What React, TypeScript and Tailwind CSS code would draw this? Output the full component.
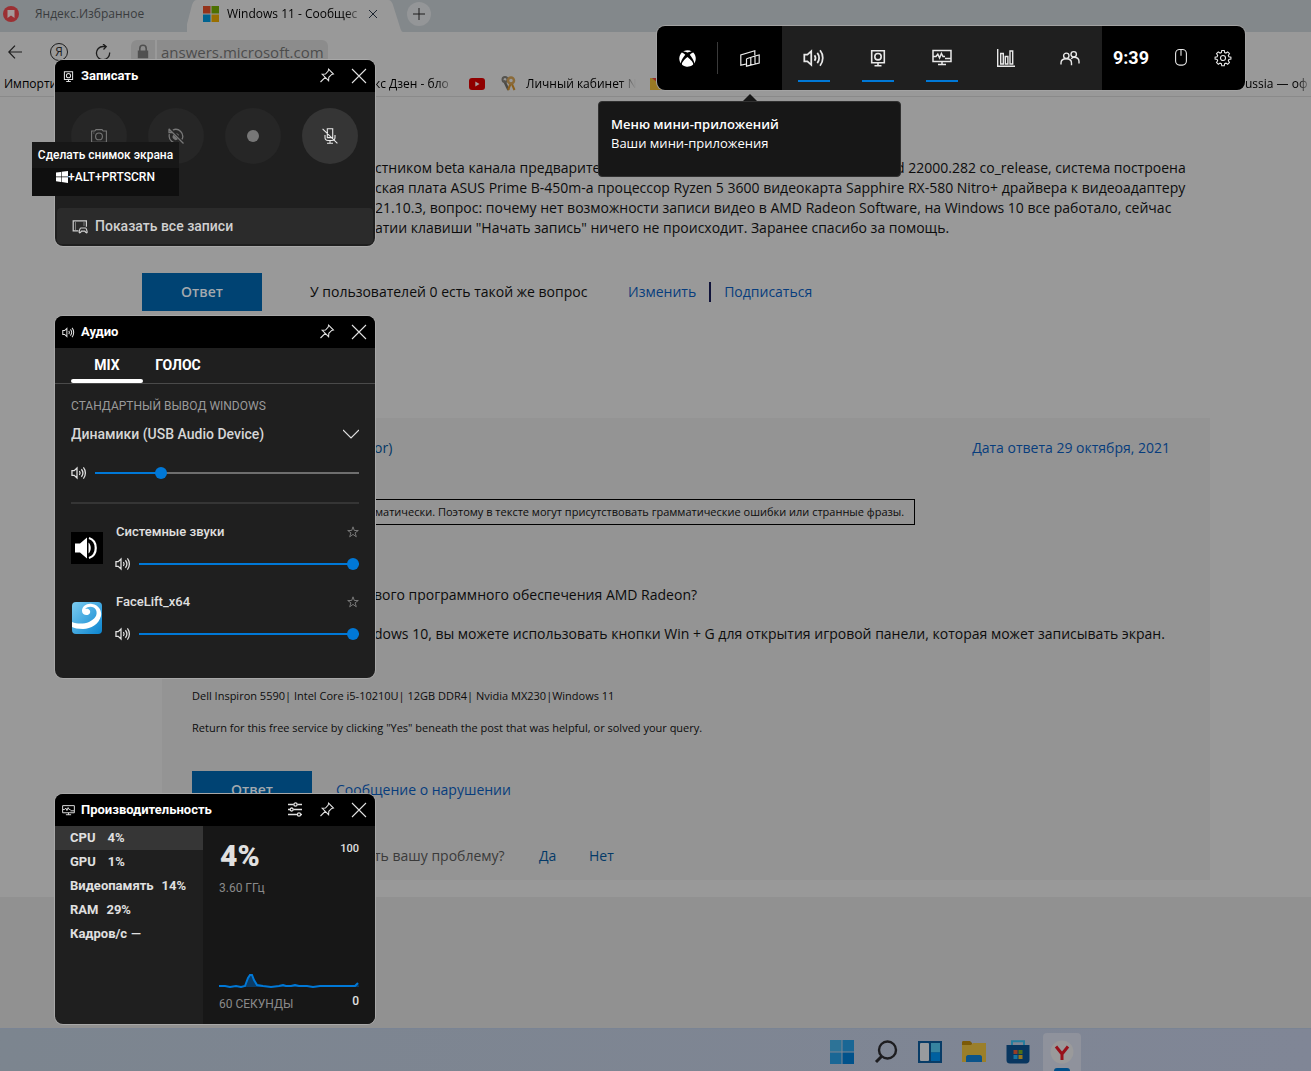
import { useState } from "react";
import type { CSSProperties, ReactNode } from "react";
import { FaXbox } from "react-icons/fa";

const CPU_POINTS =
  "0,14 6,14 11,15 17,14 22,15 26,14 29,6 31,3 33,3 35,8 38,13 44,14 52,15 60,14 64,13 67,14 72,14 76,13 80,14 88,14 94,15 101,14 108,14 116,14 124,14 132,14 136,14 139,11";

const METRICS = [
  { name: "CPU", value: "4%", gap: "gap-3" },
  { name: "GPU", value: "1%", gap: "gap-3" },
  { name: "Видеопамять", value: "14%", gap: "gap-2" },
  { name: "RAM", value: "29%", gap: "gap-2" },
  { name: "Кадров/с", value: "—", gap: "gap-1" },
];

type IconProps = { className?: string };

function SpeakerIcon({ className = "h-4 w-4" }: IconProps) {
  return (
    <svg className={className} viewBox="0 0 20 20" fill="none" stroke="currentColor" strokeWidth="1.6">
      <path d="M1.2 7v6H4l3.500 3.200V3.800L4 7zM10.500 7.500c1 1.400 1 3.600 0 5M13 5.300c2.200 2.700 2.200 6.700 0 9.400M15.500 3c3.300 4 3.300 10 0 14" />
    </svg>
  );
}

function CaptureIcon({ className = "h-5 w-5" }: IconProps) {
  return (
    <svg className={className} viewBox="0 0 20 20" fill="none" stroke="currentColor" strokeWidth="1.6">
      <path d="M3.700 2.700h12.600v12H3.700zM10 14.700v3M6.500 17.700h7" />
      <circle cx="10" cy="8.700" r="3.200" />
    </svg>
  );
}

function MonitorIcon({ className = "h-5 w-5" }: IconProps) {
  return (
    <svg className={className} viewBox="0 0 20 20" fill="none" stroke="currentColor" strokeWidth="1.5">
      <path d="M1 2.500h18v11H1zM10 13.500v3M6 16.500h8M1.500 8.500h2.500l1.800-2.300 1.800 3.800 1.800-4.500L11 8.500h2M13 10.500h5.500" />
    </svg>
  );
}

function WidgetsIcon() {
  return (
    <svg className="h-5 w-5" viewBox="0 0 20 20" fill="none" stroke="currentColor" strokeWidth="1.2">
      <path d="M6.500 16 .8 17.200V7l14-4.200v4.400" />
      <path d="M6.500 10.700v7.500l12.700-3.200V7l-4.200 1v8M10.800 9.500v7.500M6.500 10.700 15 8" />
    </svg>
  );
}

function ChartIcon() {
  return (
    <svg className="h-5 w-5" viewBox="0 0 20 20" fill="none" stroke="currentColor" strokeWidth="1.4">
      <path d="M1.700 1v17.300H19M4.700 5.500h2.600v10.500H4.700zM9.300 8.500h2.600V16H9.300zM14 3h2.700v13H14z" />
    </svg>
  );
}

function PeopleIcon() {
  return (
    <svg className="h-5 w-5" viewBox="0 0 20 20" fill="none" stroke="currentColor" strokeWidth="1.4">
      <circle cx="6.300" cy="7.800" r="2.700" />
      <circle cx="13.700" cy="6.300" r="2.700" />
      <path d="M1 16.500v-1.600c0-2.500 2-4.200 5.300-4.200s5.200 1.700 5.200 4.200v2.300M11.300 11c.8-1.400 1.700-1.800 2.700-1.800 3 0 5 1.800 5 4.300v2" />
    </svg>
  );
}

function MouseIcon() {
  return (
    <svg className="h-5 w-5" viewBox="0 0 20 20" fill="none" stroke="currentColor" strokeWidth="1.1">
      <rect x="4.600" y="1.500" width="10.800" height="15.600" rx="4" />
      <path d="M10 2v5.800" />
    </svg>
  );
}

function GearIcon() {
  return (
    <svg className="h-[18px] w-[18px]" viewBox="0 0 20 20" fill="none" stroke="currentColor" strokeWidth="1.2">
      <circle cx="10" cy="10" r="2.800" />
      <path d="M8.600 1.600h2.800l.4 2.300 1.500.6 1.900-1.300 2 2-1.300 1.900.6 1.500 2.300.4v2.200l-2.300.4-.6 1.500 1.300 1.900-2 2-1.900-1.300-1.500.6-.4 2.300H8.600l-.4-2.300-1.500-.6L4.800 17l-2-2 1.300-1.900-.6-1.500-2.300-.4V9l2.300-.4.6-1.500-1.300-1.900 2-2 1.900 1.300 1.500-.6z" />
    </svg>
  );
}

function PinIcon() {
  return (
    <svg className="h-4 w-4" viewBox="0 0 16 16" fill="none" stroke="currentColor" strokeWidth="1.1">
      <path d="m9.600 1.200 4.800 4.800-1.700.4-2.900 2.900-.2 3.400-6.400-6.400 3.300-.3 2.700-2.900zM6.200 9.300 1.500 14" />
    </svg>
  );
}

function CloseIcon() {
  return (
    <svg className="h-4 w-4" viewBox="0 0 16 16" fill="none" stroke="currentColor" strokeWidth="1.1">
      <path d="m1 1 14 14M15 1 1 15" />
    </svg>
  );
}

function SettingsIcon() {
  return (
    <svg className="h-4 w-4" viewBox="0 0 16 16" fill="none" stroke="currentColor" strokeWidth="1.3">
      <path d="M1 2.500h5.700M10.300 2.500H15M1 7.500h2M6.500 7.500H15M1 12.500h9.200M13.800 12.500H15" />
      <circle cx="8.500" cy="2.500" r="1.600" />
      <circle cx="4.700" cy="7.500" r="1.500" />
      <circle cx="12" cy="12.500" r="1.600" />
    </svg>
  );
}

function CameraIcon() {
  return (
    <svg className="h-4 w-4" viewBox="0 0 16 16" fill="none" stroke="currentColor" strokeWidth="1.1">
      <path d="M.6 3h3.200L5 1.600h6L12.200 3h3.200v11.400H.6z" />
      <circle cx="8" cy="8.400" r="3.400" />
      <path d="M2.300 5h1" />
    </svg>
  );
}

function RecordLastIcon() {
  return (
    <svg className="h-4 w-4" viewBox="0 0 16 16" fill="none" stroke="currentColor" strokeWidth="1.3">
      <path d="m.7.7 14.800 14.800M4.800 2A7 7 0 0 1 14 11.400M1.400 6.200A7 7 0 0 0 10.800 14.400M1 1v3.500h3.500" />
      <path d="M5.500 6.700 10 11a3 3 0 0 1-4.500-4.300zM8 5.200A3 3 0 0 1 11 8z" fill="currentColor" stroke="none" />
    </svg>
  );
}

function MicOffIcon() {
  return (
    <svg className="h-4 w-4" viewBox="0 0 16 16" fill="none" stroke="currentColor" strokeWidth="1.1">
      <path d="M5.300.8h5.400v8.800H5.300zM3 7v2.300c0 1.900 1.300 3.200 3 3.200h4c1.700 0 3-1.300 3-3.200V7M8 12.500v2.800M5 15.300h6M.6.8l14.800 14.600" />
    </svg>
  );
}

function GalleryIcon() {
  return (
    <svg className="h-4 w-4" viewBox="0 0 16 16" fill="none" stroke="currentColor" strokeWidth="1.2">
      <path d="M6.500 12.800H1.200V2.800h13.200v6" />
      <path d="M3.500 4.500v7M12 4.500v3" strokeDasharray="1 1" strokeWidth="1" />
      <path d="M8.800 10h4.700c.8 0 1.700 3.500 1.600 4.300-.2 1-1 .6-2.300-1.200H9.500c-1.300 1.800-2.100 2.200-2.300 1.200-.1-.8.8-4.300 1.600-4.300z" />
    </svg>
  );
}

function StarIcon() {
  return (
    <svg className="h-3 w-3" viewBox="0 0 12 12" fill="none" stroke="currentColor" strokeWidth="1">
      <path d="m6 .8 1.300 3.700h4L8.100 6.800l1.200 4L6 8.400l-3.300 2.400 1.200-4L.7 4.500h4z" />
    </svg>
  );
}

function WindowsFlag() {
  return (
    <svg className="h-3 w-3" viewBox="0 0 12 12" fill="currentColor">
      <path d="M0 1.600 5 .9v4.700H0zM5.600.8 12 0v5.600H5.600zM0 6.300h5V11l-5-.7zM5.600 6.300H12V12l-6.400-.9z" />
    </svg>
  );
}

function MicrosoftLogo({ className = "h-4 w-4" }: IconProps) {
  return (
    <svg className={className} viewBox="0 0 16 16">
      <path fill="#95331a" d="M0 0h7.500v7.500H0z" />
      <path fill="#4d7000" d="M8.500 0H16v7.500H8.500z" />
      <path fill="#006390" d="M0 8.500h7.500V16H0z" />
      <path fill="#996f00" d="M8.500 8.500H16V16H8.500z" />
    </svg>
  );
}

function BrowserChrome() {
  return (
    <header className="font-['Open_Sans',sans-serif] text-xs text-[#1c1c1c]">
      <div className="flex h-8 items-stretch overflow-hidden bg-[#83888b]">
        <div className="flex w-[187px] items-center pb-1 pl-[3px] text-[#3a3c3e]">
          <svg className="mr-4 h-4 w-4" viewBox="0 0 16 16">
            <circle cx="8" cy="8" r="8" fill="#9b3033" />
            <path d="M4.500 4h7v8L8 9.600 4.500 12z" fill="#a59a9a" />
          </svg>
          Яндекс.Избранное
        </div>
        <div className="flex w-[216px]">
          <svg className="h-8 w-4 shrink-0" viewBox="0 0 16 32">
            <path fill="#999" d="M-8 32c5 0 6-2 7.500-6L5 5C6 2 7 0 10 0h6v32z" />
          </svg>
          <div className="flex min-w-0 flex-1 items-center bg-[#999] pb-1 text-black">
            <MicrosoftLogo className="mr-2 h-4 w-4 shrink-0" />
            <span className="w-[138px] overflow-hidden whitespace-nowrap [mask-image:linear-gradient(to_right,black_85%,transparent)]">
              Windows 11 - Сообщес
            </span>
            <button aria-label="Закрыть вкладку" className="ml-1 text-[#1c2530]">
              <svg className="h-2 w-2" viewBox="0 0 8 8" stroke="currentColor">
                <path d="m0 0 8 8M8 0 0 8" />
              </svg>
            </button>
          </div>
          <svg className="h-8 w-4 shrink-0" viewBox="0 0 16 32">
            <path fill="#999" d="M0 0h1c3 0 4 2 5 5l6 19c1.500 5 2.500 8 4 8H0z" />
          </svg>
        </div>
        <button
          aria-label="Новая вкладка"
          className="mt-[2px] ml-1 flex h-6 w-6 items-center justify-center rounded-full bg-[#949698]"
        >
          <svg className="h-3 w-3" viewBox="0 0 12 12" stroke="currentColor">
            <path d="M6 0v12M0 6h12" />
          </svg>
        </button>
      </div>

      <div className="flex h-10 items-center pl-2">
        <button aria-label="Назад">
          <svg className="h-4 w-4" viewBox="0 0 16 16" fill="none" stroke="currentColor" strokeWidth="1.2">
            <path d="M14 8H.8M7 1.700.8 8 7 14.300" />
          </svg>
        </button>
        <button
          aria-label="Яндекс"
          className="ml-[26px] flex h-[18px] w-[18px] items-center justify-center rounded-full border border-[#1c1c1c] text-xs"
        >
          Я
        </button>
        <button aria-label="Обновить" className="ml-[27px]">
          <svg className="h-4 w-4" viewBox="0 0 16 16" fill="none" stroke="currentColor" strokeWidth="1.3">
            <path d="M14.600 8.500A6.600 6.600 0 1 1 8 2.500h3M8 0l3.200 2.600L8.500 5.500" />
          </svg>
        </button>
        <div className="ml-5 flex h-6 w-6 items-center justify-center rounded-l-md bg-[#8c8c8c] text-[#505050]">
          <svg className="h-4 w-4" viewBox="0 0 16 16" fill="none" stroke="currentColor" strokeWidth="1.600">
            <path d="M4.800 7V4.500a3.200 3.200 0 0 1 6.400 0V7" />
            <path d="M3.600 7.300h8.800v6.200H3.600z" fill="currentColor" />
          </svg>
        </div>
        <a href="#site" className="ml-[2px] flex h-6 items-center rounded-r-md bg-[#8c8c8c] px-1 text-[15px] text-[#4c4c4c]">
          answers.microsoft.com
        </a>
      </div>

      <nav className="flex h-[25px] items-center border-b border-[#8a8a8a] text-black">
        <a href="#import" className="w-[370px] overflow-hidden whitespace-nowrap pl-1">
          Импорти
        </a>
        <a
          href="#zen"
          className="w-[84px] overflow-hidden whitespace-nowrap pl-1 [mask-image:linear-gradient(to_right,black_80%,transparent)]"
        >
          кс Дзен - бло
        </a>
        <a href="#youtube" aria-label="YouTube" className="ml-[15px]">
          <svg className="h-3 w-4" viewBox="0 0 16 12">
            <rect width="16" height="12" rx="3" fill="#900000" />
            <path d="m6.300 3.500 4.200 2.500-4.200 2.500z" fill="#a9a0a0" />
          </svg>
        </a>
        <svg className="ml-4 h-4 w-4" viewBox="0 0 16 16" fill="none">
          <path d="M3 4.500 7.500 14" stroke="#4b4943" strokeWidth="2.500" />
          <path d="m9.500 8-2.500 6M10.500 7l3 7" stroke="#8a5f1c" strokeWidth="2" />
          <circle cx="4" cy="3.500" r="2.500" stroke="#55534e" strokeWidth="2" />
          <circle cx="10" cy="4.500" r="3" stroke="#8a6a38" strokeWidth="2.500" />
        </svg>
        <a
          href="#account"
          className="ml-[9px] w-[110px] overflow-hidden whitespace-nowrap [mask-image:linear-gradient(to_right,black_85%,transparent)]"
        >
          Личный кабинет N
        </a>
        <svg className="ml-[14px] h-3 w-4" viewBox="0 0 16 12">
          <path fill="#9a7a24" d="M0 0h16v12H0z" />
          <path fill="#952b2b" d="M2 0h14v12z" />
        </svg>
        <a
          href="#russia"
          className="ml-auto w-[66px] overflow-hidden whitespace-nowrap [mask-image:linear-gradient(to_right,black_80%,transparent)]"
        >
          ussia — оф
        </a>
      </nav>
    </header>
  );
}

function AnswerButton() {
  return (
    <button className="flex h-[38px] w-[120px] items-center justify-center bg-[#004373] text-sm font-semibold text-[#a3a9ae]">
      Ответ
    </button>
  );
}

function ForumPage() {
  return (
    <main className="flex flex-1 flex-col overflow-hidden font-['Open_Sans',sans-serif] text-sm whitespace-nowrap text-[#0c0c0c]">
      <article className="pt-[61px] pl-[375px]">
        <div className="leading-5">
          <p className="flex">
            <span className="w-[521px]">стником beta канала предварите</span>
            <span>d 22000.282 co_release, система построена</span>
          </p>
          <p>ская плата ASUS Prime B-450m-a процессор Ryzen 5 3600 видеокарта Sapphire RX-580 Nitro+ драйвера к видеоадаптеру</p>
          <p>21.10.3, вопрос: почему нет возможности записи видео в AMD Radeon Software, на Windows 10 все работало, сейчас</p>
          <p>атии клавиши "Начать запись" ничего не происходит. Заранее спасибо за помощь.</p>
        </div>
      </article>

      <div className="mt-[35px] ml-[142px] flex items-center">
        <AnswerButton />
        <span className="ml-12 w-[318px]">У пользователей 0 есть такой же вопрос</span>
        <a href="#edit" className="text-[#073d7d]">
          Изменить
        </a>
        <a href="#subscribe" className="ml-[13px] border-l-2 border-[#10133a] pl-[13px] leading-5 text-[#073d7d]">
          Подписаться
        </a>
      </div>

      <section className="mt-[107px] mr-[101px] mb-[17px] ml-[162px] flex flex-col bg-[#949494] pr-10 pb-[14px] pl-[30px]">
        <div className="mt-5 flex h-5 items-center justify-between">
          <a href="#author" className="ml-[182px] text-[#043765]">
            or)
          </a>
          <a href="#date" className="text-[#073d7d]">
            Дата ответа 29 октября, 2021
          </a>
        </div>
        <div className="mt-[41px] flex h-[26px] w-[723px] items-center border border-black pl-[182px] text-[11px]">
          матически. Поэтому в тексте могут присутствовать грамматические ошибки или странные фразы.
        </div>
        <p className="mt-[60px] ml-[182px] leading-5">вого программного обеспечения AMD Radeon?</p>
        <p className="mt-[19px] ml-[182px] leading-5">
          dows 10, вы можете использовать кнопки Win + G для открытия игровой панели, которая может записывать экран.
        </p>
        <p className="mt-[42px] text-[11px] leading-5">
          Dell Inspiron 5590| Intel Core i5-10210U| 12GB DDR4| Nvidia MX230|Windows 11
        </p>
        <p className="mt-3 text-[11px] leading-5">
          Return for this free service by clicking "Yes" beneath the post that was helpful, or solved your query.
        </p>
        <div className="mt-[33px] flex items-center">
          <AnswerButton />
          <a href="#report" className="ml-6 text-[#073d7d]">
            Сообщение о нарушении
          </a>
        </div>
        <div className="mt-[37px] ml-[182px] flex h-5 items-center">
          <span className="w-[165px] text-[#3a3a3a]">ть вашу проблему?</span>
          <a href="#yes" className="w-[50px] font-medium text-[#043a68]">
            Да
          </a>
          <a href="#no" className="font-medium text-[#043a68]">
            Нет
          </a>
        </div>
      </section>

      <div className="flex-1 bg-[#919191]" />
    </main>
  );
}

function Taskbar() {
  return (
    <footer className="flex h-[43px] items-center gap-5 border-t border-[#7a8494] bg-gradient-to-r from-[#7c858f] to-[#808696] pt-1 pl-[830px]">
      <button aria-label="Пуск">
        <svg className="h-6 w-6" viewBox="0 0 24 24">
          <path fill="#2d7397" d="M0 0h11.500v11.500H0z" />
          <path fill="#1a6795" d="M12.500 0H24v11.500H12.500zM0 12.500h11.500V24H0z" />
          <path fill="#00528b" d="M12.500 12.500H24V24H12.500z" />
        </svg>
      </button>
      <button aria-label="Поиск">
        <svg className="h-6 w-6" viewBox="0 0 24 24" fill="none" stroke="#1d1d20" strokeWidth="2.400">
          <circle cx="13.500" cy="10" r="8.500" />
          <path d="m7.500 16.500-5.500 5.500" strokeWidth="3" />
        </svg>
      </button>
      <button aria-label="Мини-приложения">
        <svg className="h-6 w-6" viewBox="0 0 24 24">
          <path fill="#083c67" d="M0 1h24v22H0z" />
          <rect x="2" y="3" width="9" height="18" rx="1" fill="#989b9e" />
          <path fill="#3784a0" d="M13 3h9v9.500h-9z" />
          <path fill="#0060a0" d="M13 12.500h9V21h-9z" />
        </svg>
      </button>
      <button aria-label="Проводник">
        <svg className="h-6 w-6" viewBox="0 0 24 24">
          <path fill="#7c5a08" d="M0 2.500C0 1.500.5 1 1.500 1H8l2 2v3H0z" />
          <path fill="#9b7f2a" d="M0 5h9l2-2h13v19H0z" />
          <path fill="#0b548a" d="M4 22v-5c0-1 1-2 2-2h12c1 0 2 1 2 2v5z" />
        </svg>
      </button>
      <button aria-label="Магазин">
        <svg className="h-6 w-6" viewBox="0 0 24 24">
          <path d="M6 6V1.200h12V6" fill="none" stroke="#267e9f" strokeWidth="2" />
          <path fill="#083660" d="M.5 5h23v15c0 2-1.500 3.500-3.500 3.500H4A3.500 3.500 0 0 1 .5 20z" />
          <path fill="#963c24" d="M7.500 10h4v4h-4z" />
          <path fill="#4d7018" d="M12.500 10h4v4h-4z" />
          <path fill="#1673a0" d="M7.500 15h4v4h-4z" />
          <path fill="#98761a" d="M12.500 15h4v4h-4z" />
        </svg>
      </button>
      <button
        aria-label="Яндекс Браузер"
        className="-ml-[7px] flex h-[38px] w-[38px] flex-col items-center justify-between self-end rounded-t bg-[#8f929c] pt-[7px]"
      >
        <svg className="h-6 w-6" viewBox="0 0 24 24">
          <circle cx="12" cy="12" r="11.500" fill="#9a9a9b" />
          <path d="M6 6.500 12 14l6-7.500M12 13v7" fill="none" stroke="#98101a" strokeWidth="3" />
        </svg>
        <span className="h-[3px] w-4 rounded-t bg-[#004e88]" />
      </button>
    </footer>
  );
}

function GameBar() {
  const widgets = [
    { label: "Аудио", icon: <SpeakerIcon className="h-[22px] w-[22px]" />, active: true },
    { label: "Записать", icon: <CaptureIcon />, active: true },
    { label: "Производительность", icon: <MonitorIcon />, active: true },
    { label: "Ресурсы", icon: <ChartIcon />, active: false },
    { label: "Друзья", icon: <PeopleIcon />, active: false },
  ];

  return (
    <div className="absolute top-[26px] right-[66px] flex h-16 overflow-hidden rounded-lg bg-black font-['Roboto',sans-serif] text-[#e8e8e8] ring-1 ring-[#a3a3a3]">
      <div className="flex w-[125px] items-center">
        <button aria-label="Xbox" className="flex w-[60px] justify-center text-white">
          <FaXbox className="h-[17px] w-[17px]" />
        </button>
        <button
          aria-label="Меню мини-приложений"
          className="flex h-8 flex-1 items-center justify-center border-l border-[#3a3a3a]"
        >
          <WidgetsIcon />
        </button>
      </div>
      <div className="flex bg-[#1f1f1f]">
        {widgets.map((widget) => (
          <button key={widget.label} aria-label={widget.label} className="flex w-16 flex-col items-center pt-5">
            <span className="flex h-6 items-center">{widget.icon}</span>
            {widget.active ? <span className="mt-[10px] h-[2px] w-8 bg-[#0078d7]" /> : null}
          </button>
        ))}
      </div>
      <div className="flex w-[143px] items-center">
        <time className="w-[58px] text-center text-lg font-bold text-white">9:39</time>
        <button aria-label="Мышь" className="flex w-[42px] justify-center">
          <MouseIcon />
        </button>
        <button aria-label="Параметры" className="flex flex-1 justify-center pr-px">
          <GearIcon />
        </button>
      </div>
    </div>
  );
}

function MenuTooltip() {
  return (
    <div
      role="tooltip"
      className="absolute top-[94px] right-[410px] w-[303px] font-['Open_Sans',sans-serif] text-[13px] leading-[19px] text-white"
    >
      <svg className="mx-auto block h-[7px] w-[14px]" viewBox="0 0 14 7">
        <path d="M0 7 7 0l7 7z" fill="#171717" />
      </svg>
      <div className="h-[76px] rounded border border-[#303030] bg-[#171717] px-3 pt-[13px]">
        <p className="font-semibold">Меню мини-приложений</p>
        <p>Ваши мини-приложения</p>
      </div>
    </div>
  );
}

type WidgetProps = {
  title: string;
  icon: ReactNode;
  className: string;
  hasSettings?: boolean;
  children: ReactNode;
};

function Widget({ title, icon, className, hasSettings = false, children }: WidgetProps) {
  return (
    <section
      className={`absolute left-[55px] flex w-80 flex-col overflow-hidden rounded-lg bg-[#1f1f1f] font-['Roboto',sans-serif] text-[13px] text-[#e0e0e0] ring-1 ring-[#a8a8a8] ${className}`}
    >
      <header className="flex h-8 shrink-0 items-center bg-black pr-2 pl-[7px]">
        {icon}
        <h2 className="ml-[6px] flex-1 text-[13px] font-bold text-white">{title}</h2>
        <div className="flex gap-4">
          {hasSettings ? (
            <button aria-label="Параметры">
              <SettingsIcon />
            </button>
          ) : null}
          <button aria-label="Закрепить">
            <PinIcon />
          </button>
          <button aria-label="Закрыть">
            <CloseIcon />
          </button>
        </div>
      </header>
      {children}
    </section>
  );
}

function CaptureWidget() {
  return (
    <Widget title="Записать" icon={<CaptureIcon className="h-[13px] w-[13px]" />} className="top-[60px] h-[186px]">
      <div className="flex gap-[21px] px-4 pt-4">
        <button
          aria-label="Сделать снимок экрана"
          className="flex h-14 w-14 items-center justify-center rounded-full bg-[#262626] text-[#777]"
        >
          <CameraIcon />
        </button>
        <button
          aria-label="Записать последние 30 секунд"
          className="flex h-14 w-14 items-center justify-center rounded-full bg-[#262626] text-[#777]"
        >
          <RecordLastIcon />
        </button>
        <button aria-label="Начать запись" className="flex h-14 w-14 items-center justify-center rounded-full bg-[#262626]">
          <span className="h-3 w-3 rounded-full bg-[#777]" />
        </button>
        <button
          aria-label="Включить микрофон"
          className="flex h-14 w-14 items-center justify-center rounded-full bg-[#353535] text-[#e8e8e8]"
        >
          <MicOffIcon />
        </button>
      </div>
      <button className="mx-[2px] mt-auto mb-[2px] flex h-9 items-center gap-[7px] rounded bg-[#2b2b2b] pl-[15px] text-sm font-medium text-[#d0d0d0]">
        <GalleryIcon />
        Показать все записи
      </button>
    </Widget>
  );
}

function ScreenshotTooltip() {
  return (
    <div
      role="tooltip"
      className="absolute top-[142px] left-8 flex h-[54px] w-[147px] flex-col bg-[#0f0f0f] font-['Roboto',sans-serif] text-xs font-medium whitespace-nowrap text-white"
    >
      <p className="flex h-[26px] items-center justify-center bg-[#171717]">Сделать снимок экрана</p>
      <p className="flex h-[18px] items-center justify-center">
        <WindowsFlag />
        +ALT+PRTSCRN
      </p>
    </div>
  );
}

type VolumeSliderProps = {
  label: string;
  initialVolume: number;
  className?: string;
};

function VolumeSlider({ label, initialVolume, className = "" }: VolumeSliderProps) {
  const [volume, setVolume] = useState(initialVolume);

  return (
    <label className={`flex items-center gap-2 ${className}`}>
      <SpeakerIcon className="h-4 w-4 shrink-0" />
      <input
        type="range"
        aria-label={label}
        min={0}
        max={100}
        value={volume}
        onChange={(event) => setVolume(Number(event.target.value))}
        style={{ "--volume": `${volume}%` } as CSSProperties}
        className="h-3 min-w-0 flex-1 appearance-none bg-transparent [&::-webkit-slider-runnable-track]:h-[2px] [&::-webkit-slider-runnable-track]:bg-[linear-gradient(to_right,#0078d7_var(--volume),#6e6e6e_var(--volume))] [&::-webkit-slider-thumb]:-mt-[5px] [&::-webkit-slider-thumb]:h-3 [&::-webkit-slider-thumb]:w-3 [&::-webkit-slider-thumb]:appearance-none [&::-webkit-slider-thumb]:rounded-full [&::-webkit-slider-thumb]:bg-[#0078d7]"
      />
    </label>
  );
}

function AudioSource({ name, icon }: { name: string; icon: ReactNode }) {
  return (
    <li className="flex h-[70px] items-start">
      <div className="mt-2 mr-3 h-8 w-8 shrink-0">{icon}</div>
      <div className="flex-1">
        <div className="flex h-4 items-center justify-between font-medium">
          <span className="pl-px">{name}</span>
          <button aria-label={`В избранное: ${name}`} className="text-[#777]">
            <StarIcon />
          </button>
        </div>
        <VolumeSlider label={name} initialVolume={100} className="mt-4" />
      </div>
    </li>
  );
}

function AudioWidget() {
  return (
    <Widget title="Аудио" icon={<SpeakerIcon className="h-[13px] w-[13px]" />} className="top-[316px] h-[362px]">
      <div role="tablist" className="flex h-9 shrink-0 items-stretch border-b border-[#4a4a4a] pl-4 text-sm font-bold text-white">
        <button role="tab" aria-selected="true" className="flex w-[72px] flex-col items-center justify-between">
          <span className="pt-[7px]">MIX</span>
          <span className="h-[4px] w-full rounded-sm bg-white" />
        </button>
        <button role="tab" aria-selected="false" className="w-[70px] pb-px">
          ГОЛОС
        </button>
      </div>
      <div className="px-4 pt-[14px]">
        <label htmlFor="audio-output" className="block text-xs leading-4 text-[#9a9a9a]">
          СТАНДАРТНЫЙ ВЫВОД WINDOWS
        </label>
        <div className="mt-2 flex items-center">
          <select id="audio-output" className="h-6 flex-1 appearance-none bg-transparent text-sm font-medium text-[#d6d6d6]">
            <option>Динамики (USB Audio Device)</option>
          </select>
          <svg className="pointer-events-none h-4 w-4" viewBox="0 0 16 16" fill="none" stroke="currentColor" strokeWidth="1.200">
            <path d="m0 4 8 8 8-8" />
          </svg>
        </div>
        <VolumeSlider label="Динамики" initialVolume={24} className="mt-[19px]" />
        <hr className="mt-[21px] border-t-2 border-[#353535]" />
        <ul className="mt-5">
          <AudioSource
            name="Системные звуки"
            icon={
              <svg className="h-8 w-8" viewBox="0 0 32 32">
                <path fill="#000" d="M0 0h32v32H0z" />
                <path fill="#fff" d="M4 11.500h5l7-6v21l-7-6H4zM17.500 10.500c3 2.500 3 8.500 0 11z" />
                <path d="M18 6c9 3 9 17 0 20" fill="none" stroke="#fff" strokeWidth="2.200" />
              </svg>
            }
          />
          <AudioSource
            name="FaceLift_x64"
            icon={
              <svg className="h-8 w-8" viewBox="0 0 32 32">
                <defs>
                  <linearGradient id="facelift-sky" x1="0" y1="0" x2="1" y2="1">
                    <stop offset="0" stopColor="#7cccf0" />
                    <stop offset="1" stopColor="#0a84cf" />
                  </linearGradient>
                </defs>
                <rect x="1" width="30" height="32" rx="4" fill="url(#facelift-sky)" />
                <path
                  d="M1 20c5 2 12 2 17 0 6-3 9-7 7-12-2-4-8-4-11-1 3-1 6 1 5 4s-8 3-8-2 5-8 10-7c7 1 10 7 9 12-2 8-10 13-18 13-5 0-9-1-11-2z"
                  fill="#fff"
                />
              </svg>
            }
          />
        </ul>
      </div>
    </Widget>
  );
}

function PerformanceWidget() {
  return (
    <Widget
      title="Производительность"
      icon={<MonitorIcon className="h-[13px] w-[13px]" />}
      className="top-[794px] h-[230px]"
      hasSettings
    >
      <div className="flex flex-1">
        <ul className="w-[148px] text-[13px] font-bold">
          {METRICS.map((metric, index) => (
            <li key={metric.name} className={index === 0 ? "bg-[#363636]" : ""}>
              <button className={`flex h-6 w-full items-center pl-[15px] ${metric.gap}`}>
                <span>{metric.name}</span>
                <span>{metric.value}</span>
              </button>
            </li>
          ))}
        </ul>
        <div className="flex flex-1 flex-col bg-[#171717] px-4 pt-[14px] pb-3">
          <div className="flex items-start justify-between">
            <div>
              <p className="pl-px text-3xl leading-8 font-black text-[#e0e0e0]">4%</p>
              <p className="mt-2 text-xs leading-4 text-[#8a8a8a]">3.60 ГГц</p>
            </div>
            <span className="text-[11px] leading-[18px] font-medium">100</span>
          </div>
          <svg className="mt-auto h-5 w-full" viewBox="0 0 140 20" preserveAspectRatio="none">
            <polygon points={`0,15 ${CPU_POINTS} 140,15`} fill="#0b3c66" />
            <polyline points={CPU_POINTS} fill="none" stroke="#0078d7" strokeWidth="2" />
          </svg>
          <div className="mt-1 flex justify-between text-xs">
            <span className="text-[#8a8a8a]">60 СЕКУНДЫ</span>
            <span className="leading-[11px] font-medium">0</span>
          </div>
        </div>
      </div>
    </Widget>
  );
}

export default function App() {
  return (
    <div className="relative flex min-h-screen flex-col bg-[#999]">
      <BrowserChrome />
      <ForumPage />
      <Taskbar />

      <CaptureWidget />
      <ScreenshotTooltip />
      <AudioWidget />
      <PerformanceWidget />
      <GameBar />
      <MenuTooltip />
    </div>
  );
}
